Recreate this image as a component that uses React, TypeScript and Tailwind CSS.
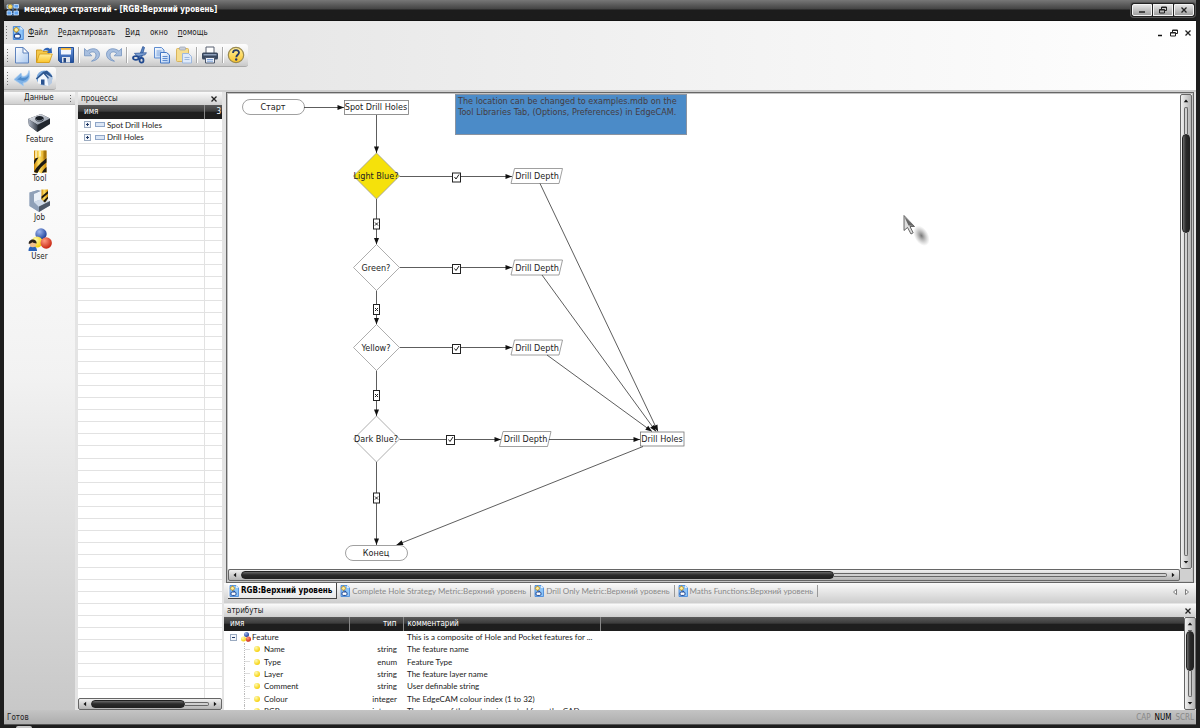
import type { ReactNode } from "react";

const noop = () => {};

/* ---------- icons ---------- */

function Defs() {
  return (
    <svg width="0" height="0" className="absolute" aria-hidden="true">
      <defs>
        <linearGradient id="page" x1="0" y1="0" x2="1" y2="1">
          <stop offset="0" stopColor="#ffffff" />
          <stop offset="1" stopColor="#a9c8f0" />
        </linearGradient>
        <linearGradient id="blue" x1="0" y1="0" x2="0" y2="1">
          <stop offset="0" stopColor="#6f9be0" />
          <stop offset="1" stopColor="#1f4d9c" />
        </linearGradient>
        <linearGradient id="gold" x1="0" y1="0" x2="0" y2="1">
          <stop offset="0" stopColor="#fff0a0" />
          <stop offset="1" stopColor="#fbc42a" />
        </linearGradient>
        <linearGradient id="steel" x1="0" y1="0" x2="1" y2="1">
          <stop offset="0" stopColor="#f4f6fa" />
          <stop offset="1" stopColor="#7d8797" />
        </linearGradient>
        <linearGradient id="steelDark" x1="0" y1="0" x2="1" y2="0">
          <stop offset="0" stopColor="#b4bccb" />
          <stop offset="1" stopColor="#3a414c" />
        </linearGradient>
        <linearGradient id="drill" x1="0" y1="0" x2="1" y2="0">
          <stop offset="0" stopColor="#c98200" />
          <stop offset=".4" stopColor="#ffe36b" />
          <stop offset="1" stopColor="#d18b00" />
        </linearGradient>
        <radialGradient id="ballBlue" cx=".35" cy=".3" r=".75">
          <stop offset="0" stopColor="#9fb8f0" />
          <stop offset="1" stopColor="#173a94" />
        </radialGradient>
        <radialGradient id="ballRed" cx=".35" cy=".3" r=".75">
          <stop offset="0" stopColor="#ff9a80" />
          <stop offset="1" stopColor="#c5200c" />
        </radialGradient>
        <radialGradient id="ballYellow" cx=".35" cy=".3" r=".75">
          <stop offset="0" stopColor="#fffbb0" />
          <stop offset="1" stopColor="#f5cd00" />
        </radialGradient>
        <radialGradient id="shadow">
          <stop offset="0" stopColor="#555" stopOpacity=".8" />
          <stop offset="1" stopColor="#888" stopOpacity="0" />
        </radialGradient>
      </defs>
    </svg>
  );
}

function Svg({ className, box = "0 0 18 18", children }: { className: string; box?: string; children: ReactNode }) {
  return (
    <svg viewBox={box} className={"shrink-0 " + className} aria-hidden="true">
      {children}
    </svg>
  );
}

const AppIcon = () => (
  <Svg className="size-3.5" box="0 0 14 14">
    <path d="M3 3.500h8v7H3zM7 1v12" fill="none" stroke="#4d8fe0" />
    <path d="M8 1.500h4.500v3.500H8zM1 8h4.500v4H1zM8 8h4.500v4H8z" fill="#5fa3f0" stroke="#cfe4fd" strokeWidth=".8" />
    <path d="M1 2h5v3.500H1z" fill="#5fa3f0" stroke="#cfe4fd" strokeWidth=".8" />
    <circle cx="4.200" cy="3.700" r="2.200" fill="#fbdc6a" stroke="#8a6a10" strokeWidth=".5" />
  </Svg>
);

const DocIcon = ({ className = "h-3 w-2.5" }: { className?: string }) => (
  <Svg className={className} box="0 0 10 12">
    <path d="M1 .5H7L9.500 3v8.500H1z" fill="#8cc4f8" stroke="#3f84d8" strokeWidth=".8" />
    <path d="M7 .5L9.500 3H7z" fill="#e3f0ff" />
    <path d="M3.500.6v5.400M.8 3.300h5.400" stroke="#c08a10" strokeWidth=".8" />
    <circle cx="3.500" cy="3.300" r="1.900" fill="#fff0a0" stroke="#c08a10" strokeWidth=".7" />
    <rect x="2" y="7" width="5" height="3.400" rx="1.200" fill="#fff" stroke="#1c4490" strokeWidth="1" />
    <path d="M3.500 6h2v1" stroke="#1c4490" fill="none" strokeWidth=".8" />
  </Svg>
);

const NewIcon = () => (
  <Svg className="size-[18px]">
    <path d="M2.500 1.500H10L15.500 7v10h-13z" fill="url(#page)" stroke="#5e83bd" />
    <path d="M10 1.500V7h5.500z" fill="#fff" stroke="#5e83bd" strokeLinejoin="round" />
  </Svg>
);
const OpenIcon = () => (
  <Svg className="size-[18px]">
    <path d="M1.500 16V4h5L8 5.500h6V16z" fill="#f3c84a" stroke="#c58a0a" strokeWidth=".8" />
    <path d="M1.500 16.500l3-8.500h12.800l-3 8.500z" fill="url(#gold)" stroke="#d69a12" strokeWidth=".8" />
    <path d="M8 5c1.500-3.500 5-4 7-2l1.500-1.500.5 5.500h-5l1.500-1.700C12 4 10 4 8 5z" fill="#2f64b5" />
  </Svg>
);
const SaveIcon = () => (
  <Svg className="size-[18px]">
    <path d="M1.500 1.500h15v15h-13l-2-2z" fill="url(#blue)" stroke="#244f94" />
    <path d="M4 2h10v6.500H4z" fill="#f2f7ff" />
    <path d="M4 2h10v1.800H4z" fill="#f3b53a" />
    <path d="M5 11h8v5.500H5z" fill="#dfe5ee" />
    <path d="M6.500 12h2.500v4.500H6.500z" fill="#26477f" />
  </Svg>
);
const UndoShape = () => (
  <path
    d="M1.500 2.500v7.300h7.300L6.400 7.200C9 5 12.800 5.600 13 9c.1 2.600-1.700 4.700-4.500 6.200 5-.6 8-3.300 8-7 0-5.500-7.500-7.500-12.500-3z"
    fill="#a8bfdf"
    stroke="#7393bf"
    strokeWidth=".8"
    strokeLinejoin="round"
  />
);
const UndoIcon = () => (
  <Svg className="size-[18px]">
    <UndoShape />
  </Svg>
);
const RedoIcon = () => (
  <Svg className="size-[18px]">
    <g transform="translate(18 0) scale(-1 1)">
      <UndoShape />
    </g>
  </Svg>
);
const CutIcon = () => (
  <Svg className="size-[18px]">
    <path d="M11.800 .5L13.500 1.500 10.500 12 8 11z" fill="#5c87c4" stroke="#20498f" strokeWidth=".7" />
    <path d="M4 5.500L15.500 9l-2 1.500L6 9.500z" fill="#7ea1d2" stroke="#20498f" strokeWidth=".6" transform="rotate(-20 9 8)" />
    <ellipse cx="4.800" cy="12" rx="2.800" ry="1.900" fill="none" stroke="#20498f" strokeWidth="1.800" />
    <ellipse cx="10.500" cy="14.300" rx="2" ry="2.400" fill="none" stroke="#20498f" strokeWidth="1.800" />
  </Svg>
);
const CopyIcon = () => (
  <Svg className="size-[18px]">
    <path d="M1.500 1.500h7L11 4v8H1.500z" fill="url(#page)" stroke="#5e8cd0" />
    <path d="M3.500 5h5M3.500 7h5M3.500 9h5" stroke="#7ea4dc" />
    <path d="M7.500 6.500h6L16.500 9v8h-9z" fill="url(#page)" stroke="#4377c4" />
    <path d="M9.500 10.500h5M9.500 12.500h5M9.500 14.500h5" stroke="#5e8cd0" />
  </Svg>
);
const PasteIcon = () => (
  <Svg className="size-[18px]">
    <rect x="1.500" y="2.500" width="12" height="13" rx="1" fill="#f5dd90" stroke="#d9b45c" />
    <rect x="4.500" y="1" width="6" height="3" rx="1" fill="#c9ced8" stroke="#9aa3b5" strokeWidth=".7" />
    <path d="M7.500 7.500h6l3 3V17h-9z" fill="#dfeafa" stroke="#9db8de" />
    <path d="M9.500 11.500h5M9.500 13.500h5" stroke="#9db8de" />
  </Svg>
);
const PrintIcon = () => (
  <Svg className="size-[18px]">
    <path d="M5 1h8v7H5z" fill="#fff" stroke="#596170" />
    <rect x="1" y="6.500" width="16" height="7" rx="1.500" fill="#39485f" />
    <path d="M2.500 8h13v1.500h-13z" fill="#8fa0ba" />
    <path d="M4.500 11.500h9V17h-9z" fill="#eef3fb" stroke="#4a566b" />
    <path d="M6 13.500h6M6 15.200h6" stroke="#5f8dd3" strokeWidth=".8" />
  </Svg>
);
const HelpIcon = () => (
  <Svg className="size-[18px]">
    <circle cx="9" cy="9" r="7.700" fill="url(#gold)" stroke="#9a8a50" strokeWidth="1.200" />
    <path d="M6 7c0-3.800 6-3.800 6-.4 0 2-2.700 2.300-2.700 4.600" fill="none" stroke="#2a3b66" strokeWidth="1.800" />
    <circle cx="9.200" cy="13.500" r="1.200" fill="#2a3b66" />
  </Svg>
);
const BackIcon = () => (
  <Svg className="size-[18px]">
    <path d="M1 10.500L8 4l1 3.300C13 8 15 5.500 16 1.500c2 7-.5 12-6 12.500l.5 3z" fill="#7fb2e6" stroke="#a9cdf0" strokeWidth=".8" />
    <path d="M4 10.500l4-3 .5 1.500c4 .3 6-1 7.500-3-1 4-3 5.500-6.500 5.800z" fill="#4f8ccc" />
  </Svg>
);
const HomeIcon = () => (
  <Svg className="size-[18px]">
    <ellipse cx="9.500" cy="9" rx="8" ry="7.500" fill="#7ba9dc" />
    <path d="M12 1.500l5.500 6-1 1-5-2.500-3.500-3z" fill="#2d568f" />
    <path d="M3 9l5.500-5 5 5.500v7.500L3 14.500z" fill="#f2f7fd" />
    <path d="M13.500 17l3.500-3V8.500L11 5z" fill="#b5c9e2" />
    <path d="M.8 9.500L8.500 2.500l5.500 6.500-1 .8L8.500 4.800 2 10.500z" fill="#2d568f" />
    <path d="M6 10.500h3.500v5.600L6 15.500z" fill="#2a5390" />
  </Svg>
);

const FeatureIcon = () => (
  <Svg className="size-6" box="0 0 24 24">
    <path d="M1 8L14 3l9 4.500v5.500L10.500 21 2 14.500z" fill="#22272e" />
    <path d="M1 8L14 3l9 4.500-12.500 6.300z" fill="url(#steel)" />
    <path d="M1 8l9.500 5.800V21L2 14.500z" fill="url(#steelDark)" />
    <ellipse cx="12.500" cy="7.800" rx="4.200" ry="2.800" fill="#1b2027" />
    <path d="M9 8.500c2 2.200 6 1.500 7-.5" stroke="#8b95a5" fill="none" />
  </Svg>
);
const ToolIcon = () => (
  <Svg className="size-6" box="0 0 24 24">
    <path d="M6 .5h12.500V23l-3-1.500-2 2-3-1.500-2 1.500L6 22z" fill="url(#drill)" />
    <path d="M6 22C8 17 14 12 18.500 8v4.500C14 16 11 19 9.500 23zM6 11C7.500 8 8 8 10.500 7.500L6 14.500zM14 23c.5-2.500 2.500-4.500 4.500-6V22z" fill="#1d1a12" />
    <path d="M8 .5v7.500M12 .5v6" stroke="#fff6c8" strokeWidth="1.500" />
    <path d="M15.500.5h3v7l-3 2z" fill="#7a5200" opacity=".5" />
  </Svg>
);
const JobIcon = () => (
  <Svg className="size-6" box="0 0 24 24">
    <path d="M1.500 3.500L10 1v9l5 3 7 1.500v2L11 23l-9.500-6z" fill="#aab9ce" />
    <path d="M1.500 3.500L10 1l3.500 1L6 5v8l5 3.500V23l-9.500-6z" fill="#8fa0b8" />
    <path d="M6 5l7.500-3v8l-7.500 3z" fill="#eaf0f8" />
    <path d="M6 13l7.500-3 8.500 2-11 6z" fill="#cfdae9" />
    <path d="M11 17.500L22 12v4.500L11 23z" fill="#4b5666" />
    <path d="M13.500 .5h6.500v9l-3 4-3.500-3z" fill="url(#drill)" />
    <path d="M13.500 7.500L20 2v2.500L13.500 10zM15 12l5-4.500v2L17 13.500z" fill="#1d1a12" />
  </Svg>
);
const UserIcon = () => (
  <Svg className="size-6" box="0 0 24 24">
    <circle cx="13" cy="6" r="5.700" fill="url(#ballBlue)" />
    <circle cx="9" cy="14" r="5.500" fill="url(#ballYellow)" />
    <circle cx="18.200" cy="15" r="5.700" fill="url(#ballRed)" />
    <path d="M.5 23c0-4 2-5 4-5s4.500 1 4.500 5z" fill="#2b62b8" />
    <circle cx="4.800" cy="16" r="3.200" fill="#f0c08c" />
    <path d="M.8 16c-.8-6 8.500-6 7.800-.4-2-.2-3.200-.8-4.200-1.300-.8.800-2 1.400-3.600 1.700z" fill="#2a2118" />
  </Svg>
);
const BallsIcon = () => (
  <Svg className="size-2.5" box="0 0 10 10">
    <circle cx="5.500" cy="2.500" r="2.500" fill="url(#ballBlue)" />
    <circle cx="2.500" cy="7" r="2.500" fill="url(#ballYellow)" />
    <circle cx="7.500" cy="7.200" r="2.600" fill="url(#ballRed)" />
  </Svg>
);

const WinMin = () => <Svg className="size-2" box="0 0 8 8"><path d="M1 6h6" stroke="#222" strokeWidth="1.500" /></Svg>;
const WinRestore = () => (
  <Svg className="size-2" box="0 0 8 8">
    <path d="M2.500 3V1h5v3.500H6M.5 3.500h5V7h-5z" fill="none" stroke="#222" />
    <path d="M.5 4h5M2.500 1.500h5" stroke="#222" />
  </Svg>
);
const WinClose = () => <Svg className="size-2" box="0 0 8 8"><path d="M1.500 1.500l5 5M6.500 1.500l-5 5" stroke="#222" strokeWidth="1.300" /></Svg>;

/* ---------- scroll bars ---------- */

const arrows = {
  left: "M5.500 1v6L2 4z",
  right: "M2.500 1v6L6 4z",
  up: "M1 5.500h6L4 2z",
  down: "M1 2.500h6L4 6z",
};

function ArrowButton({ dir }: { dir: keyof typeof arrows }) {
  return (
    <button type="button" aria-label={"Scroll " + dir} onClick={noop} className="flex size-3 shrink-0 items-center justify-center">
      <Svg className="size-1.5" box="0 0 8 8">
        <path d={arrows[dir]} fill="#111" />
      </Svg>
    </button>
  );
}

function HScroll({ size }: { size: number }) {
  return (
    <div className="flex h-3 w-full items-center rounded-[2px] border border-[#666] bg-linear-to-b from-[#f0f0f0] to-[#b4b4b4]">
      <ArrowButton dir="left" />
      <div className="flex min-w-0 flex-1 items-center">
        <div style={{ width: size + "%" }} className="h-2 rounded-full border border-[#222] bg-linear-to-b from-[#6a6a6a] via-[#2a2a2a] to-[#222]" />
        <div className="h-1 flex-1 rounded-r-full border border-l-0 border-[#666] bg-[#d0d0d0]" />
      </div>
      <ArrowButton dir="right" />
    </div>
  );
}

function VScroll({ before, size }: { before: number; size: number }) {
  return (
    <div className="flex h-full w-3 flex-col items-center rounded-[2px] border border-[#666] bg-linear-to-r from-[#f0f0f0] to-[#b4b4b4]">
      <ArrowButton dir="up" />
      <div className="flex min-h-0 flex-1 flex-col items-center">
        <div style={{ height: before + "%" }} className="w-1 rounded-t-full border border-b-0 border-[#666] bg-[#d0d0d0]" />
        <div style={{ height: size + "%" }} className="w-2 rounded-full border border-[#222] bg-linear-to-r from-[#6a6a6a] via-[#2a2a2a] to-[#222]" />
        <div className="w-1 flex-1 rounded-b-full border border-t-0 border-[#666] bg-[#d0d0d0]" />
      </div>
      <ArrowButton dir="down" />
    </div>
  );
}

/* ---------- window parts ---------- */

function Grip() {
  return (
    <span className="flex w-1 shrink-0 flex-col gap-0.5">
      {[0, 1, 2, 3, 4].map((i) => (
        <span key={i} className="size-px bg-[#777]" />
      ))}
    </span>
  );
}

function TitleBar() {
  const cls = "flex h-3 w-5 items-center justify-center border border-[#f4f4f4] bg-linear-to-b from-[#e4e4e4] to-[#a0a0a0]";
  return (
    <header className="flex h-[21px] shrink-0 items-center border-b border-[#111] bg-linear-to-b from-[#777] via-[#444] via-45% to-[#1c1c1c] to-50% pr-px">
      <div className="flex flex-1 items-center gap-1 pl-0.5">
        <AppIcon />
        <h1 className="text-[8px] font-bold text-white">менеджер стратегий - [RGB:Верхний уровень]</h1>
      </div>
      <div className="flex gap-px rounded-[3px] bg-[#222] p-px shadow-[0_0_0_1px_#555]">
        <button type="button" aria-label="Свернуть" className={cls + " rounded-l-[2px]"}><WinMin /></button>
        <button type="button" aria-label="Восстановить" className={cls}><WinRestore /></button>
        <button type="button" aria-label="Закрыть" className={cls + " rounded-r-[2px]"}><WinClose /></button>
      </div>
    </header>
  );
}

const menus = [
  ["Ф", "айл"],
  ["Р", "едактировать"],
  ["В", "ид"],
  ["", "окно"],
  ["п", "омощь"],
];

function MenuBar() {
  return (
    <nav className="flex h-[23px] items-center pr-1 pl-0.5">
      <Grip />
      <span className="ml-0.5">
        <DocIcon className="h-3.5 w-3" />
      </span>
      <ul className="flex flex-1 gap-2.5 pl-1 text-[8px]">
        {menus.map(([key, rest]) => (
          <li key={rest}>
            <button type="button">
              <u className="underline-offset-1">{key}</u>
              {rest}
            </button>
          </li>
        ))}
      </ul>
      <div className="flex items-center gap-1.5">
        <button type="button" aria-label="Свернуть документ"><Svg className="size-2" box="0 0 8 8"><path d="M2 6.500h4" stroke="#111" strokeWidth="1.500" /></Svg></button>
        <button type="button" aria-label="Восстановить документ"><WinRestore /></button>
        <button type="button" aria-label="Закрыть документ"><WinClose /></button>
      </div>
    </nav>
  );
}

const tools: ([string, () => ReactNode] | null)[] = [
  ["Создать", NewIcon],
  ["Открыть", OpenIcon],
  ["Сохранить", SaveIcon],
  null,
  ["Отменить", UndoIcon],
  ["Вернуть", RedoIcon],
  null,
  ["Вырезать", CutIcon],
  ["Копировать", CopyIcon],
  ["Вставить", PasteIcon],
  null,
  ["Печать", PrintIcon],
  null,
  ["Справка", HelpIcon],
];
const navTools: typeof tools = [
  ["Назад", BackIcon],
  ["Домой", HomeIcon],
];

function Toolbar({ items }: { items: typeof tools }) {
  return (
    <div className="flex h-[23px] items-center self-start rounded-r-[3px] border-b border-[#aaa] bg-linear-to-b from-[#fdfdfd] via-[#ededed] to-[#c9c9c9] pr-px pl-[3px]">
      <Grip />
      {items.map((t, i) => {
        if (!t) return <span key={i} className="mx-px h-4 w-0.5 border-r border-l border-r-white border-l-[#aaa]" />;
        const Icon = t[1];
        return (
          <button key={i} type="button" aria-label={t[0]} className="flex w-[22px] justify-center">
            <Icon />
          </button>
        );
      })}
    </div>
  );
}

const paneHead = "flex h-[13px] shrink-0 items-center bg-linear-to-b from-[#fafafa] to-[#cfcfcf] text-[8px]";
const darkHead = "bg-linear-to-b from-[#5a5a5a] via-[#3c3c3c] via-45% to-[#1e1e1e] to-50%";

const dataItems: [string, () => ReactNode][] = [
  ["Feature", FeatureIcon],
  ["Tool", ToolIcon],
  ["Job", JobIcon],
  ["User", UserIcon],
];

function Sidebar() {
  return (
    <aside className="flex w-[71px] shrink-0 flex-col">
      <div className={paneHead + " border-b border-[#bbb] pr-1 pl-5"}>
        <h2 className="flex-1">Данные</h2>
        <span className="flex flex-col gap-0.5">
          <i className="size-px bg-[#666]" />
          <i className="size-px bg-[#666]" />
          <i className="size-px bg-[#666]" />
        </span>
      </div>
      <ul className="flex flex-1 flex-col items-center gap-1 bg-linear-to-b from-white via-[#f2f2f2] via-45% to-[#c8c8c8] pt-1.5 text-[8px]">
        {dataItems.map(([label, Icon]) => (
          <li key={label}>
            <button type="button" className="flex h-[35px] flex-col items-center leading-[10px]">
              <Icon />
              {label}
            </button>
          </li>
        ))}
      </ul>
    </aside>
  );
}

function Expander({ open }: { open?: boolean }) {
  return (
    <button type="button" aria-label={open ? "Свернуть" : "Развернуть"} className="flex size-[7px] shrink-0 items-center justify-center border border-[#9aaac0] bg-[#f2f5fa]">
      <Svg className="size-[5px]" box="0 0 5 5">
        <path d={open ? "M1 2.500h3" : "M1 2.500h3M2.500 1v3"} stroke="#223a66" />
      </Svg>
    </button>
  );
}

const processes = ["Spot Drill Holes", "Drill Holes"];

function Processes() {
  return (
    <section className="flex w-[144px] shrink-0 flex-col bg-white">
      <div className={paneHead + " pr-1 pl-[3px]"}>
        <h2 className="flex-1">процессы</h2>
        <button type="button" aria-label="Закрыть"><WinClose /></button>
      </div>
      <div className="h-0 flex-1 overflow-hidden">
        <table className="h-[calc(100%+3px)] w-full table-fixed border-collapse text-[8px] leading-[10px]">
          <thead>
            <tr className={"h-[14px] text-white " + darkHead}>
              <th className="border-r border-[#888] p-0 pl-1.5 text-left font-normal">имя</th>
              <th className="w-[18px] p-0 pr-px text-right font-normal">3</th>
            </tr>
          </thead>
          <tbody>
            {Array.from({ length: 48 }, (_, i) => (
              <tr key={i} className="h-3 border-b border-[#e2e2e2]">
                <td className="border-r border-[#e2e2e2] p-0">
                  {processes[i] && (
                    <div className="flex h-2.5 items-center pl-1.5 font-[Lato,sans-serif]">
                      <Expander />
                      <span className="mr-0.5 ml-1 h-[5px] w-[10px] border border-[#8fa6c8] bg-[#dbe6f5]" />
                      {processes[i]}
                    </div>
                  )}
                </td>
                <td className="p-0" />
              </tr>
            ))}
          </tbody>
        </table>
      </div>
      <HScroll size={80} />
    </section>
  );
}

/* ---------- strategy diagram ---------- */

function Arrow({ x1, y1, x2, y2 }: { x1: number; y1: number; x2: number; y2: number }) {
  const a = (Math.atan2(y2 - y1, x2 - x1) * 180) / Math.PI;
  return (
    <g>
      <path d={`M${x1} ${y1}L${x2} ${y2}`} stroke="#333" strokeWidth=".8" />
      <path d="M0 0l-6.500-2.500v5z" fill="#111" transform={`translate(${x2} ${y2}) rotate(${a})`} />
    </g>
  );
}
function Label({ x, y, children }: { x: number; y: number; children: string }) {
  return (
    <text x={x} y={y + 3} textAnchor="middle" fill="#222" className="text-[9px]">
      {children}
    </text>
  );
}
function Decision({ y, label, fill = "#fff" }: { y: number; label: string; fill?: string }) {
  return (
    <g>
      <path d={`M376.500 ${y - 23}l23 23-23 23-23-23z`} fill={fill} stroke="#999" strokeWidth=".8" />
      <Label x={376} y={y}>{label}</Label>
    </g>
  );
}
function Depth({ x, y }: { x: number; y: number }) {
  return (
    <g>
      <path d={`M${x - 22.5} ${y - 7.5}h48l-3.500 15h-48z`} fill="#fff" stroke="#888" strokeWidth=".8" />
      <Label x={x} y={y}>Drill Depth</Label>
    </g>
  );
}
const Yes = ({ x, y }: { x: number; y: number }) => (
  <g>
    <rect x={x - 4} y={y - 4} width="8" height="9" fill="#fff" stroke="#222" />
    <path d={`M${x - 2} ${y}l1.500 2 3-4.500`} fill="none" stroke="#222" />
  </g>
);
const No = ({ y }: { y: number }) => (
  <g>
    <rect x="373.500" y={y - 5} width="6" height="10" fill="#fff" stroke="#222" />
    <path d={`M375 ${y - 1.5}l3 3M378 ${y - 1.5}l-3 3`} stroke="#222" />
  </g>
);

function Diagram() {
  return (
    <svg width="952" height="475" viewBox="228 94 952 475" className="block max-w-none" role="img" aria-label="RGB:Верхний уровень">
      <rect x="455.500" y="94.500" width="231" height="40" fill="#4b8bc8" stroke="#8a93a0" />
      <text fill="#453c42" className="text-[9px]">
        <tspan x="458" y="104">The location can be changed to examples.mdb on the</tspan>
        <tspan x="458" y="115">Tool Libraries Tab, (Options, Preferences) in EdgeCAM.</tspan>
      </text>

      <rect x="242.500" y="99.500" width="62" height="15" rx="7.500" fill="#fff" stroke="#888" strokeWidth=".8" />
      <Label x={273} y={107}>Старт</Label>
      <rect x="344.500" y="100.500" width="64" height="14" fill="#fff" stroke="#777" strokeWidth=".8" />
      <Label x={376} y={107}>Spot Drill Holes</Label>
      <Arrow x1={304} y1={107.5} x2={344} y2={107.5} />

      <Arrow x1={376.5} y1={115} x2={376.5} y2={153} />
      <Arrow x1={376.5} y1={199} x2={376.5} y2={244.5} />
      <Arrow x1={376.5} y1={290.5} x2={376.5} y2={324.5} />
      <Arrow x1={376.5} y1={370.5} x2={376.5} y2={416} />
      <Arrow x1={376.5} y1={462} x2={376.5} y2={545} />
      <No y={224} />
      <No y={309.5} />
      <No y={395.5} />
      <No y={498} />

      <Arrow x1={399.5} y1={176.5} x2={512} y2={176.5} />
      <Arrow x1={399.5} y1={267.5} x2={512} y2={267.5} />
      <Arrow x1={399.5} y1={347.5} x2={512} y2={347.5} />
      <Arrow x1={399.5} y1={439.5} x2={501} y2={439.5} />
      <Yes x={456.5} y={177} />
      <Yes x={456.5} y={268.5} />
      <Yes x={456.5} y={348.5} />
      <Yes x={450.5} y={439.5} />

      <Decision y={176} label="Light Blue?" fill="#f5e10b" />
      <Decision y={267.5} label="Green?" />
      <Decision y={347.5} label="Yellow?" />
      <Decision y={439} label="Dark Blue?" />

      <Depth x={537} y={176} />
      <Depth x={537} y={267.5} />
      <Depth x={537} y={347.5} />
      <Depth x={525.5} y={439} />

      <Arrow x1={540} y1={183.5} x2={658} y2={431.5} />
      <Arrow x1={542} y1={275} x2={656} y2={431.5} />
      <Arrow x1={547} y1={355} x2={652} y2={431.5} />
      <Arrow x1={549} y1={439.5} x2={640} y2={439.5} />
      <rect x="640.500" y="432" width="43.500" height="14" fill="#fff" stroke="#777" strokeWidth=".8" />
      <Label x={662} y={439}>Drill Holes</Label>
      <Arrow x1={643} y1={446.5} x2={396.5} y2={545} />

      <rect x="345.500" y="545.500" width="62" height="15" rx="7.500" fill="#fff" stroke="#888" strokeWidth=".8" />
      <Label x={376} y={553}>Конец</Label>

      <ellipse cx="921.500" cy="236" rx="7" ry="11" fill="url(#shadow)" transform="rotate(-30 921 236)" />
      <path d="M904 215.500v15l3.500-3 3.500 6.500 2.200-1.200-3.200-6.300h4.500z" fill="#ddd" stroke="#444" strokeWidth=".8" strokeLinejoin="round" />
      <path d="M904.500 217l9.500 9-5.500-.5z" fill="#666" />
    </svg>
  );
}

const tabs = ["RGB:Верхний уровень", "Complete Hole Strategy Metric:Верхний уровень", "Drill Only Metric:Верхний уровень", "Maths Functions:Верхний уровень"];

function Tabs() {
  return (
    <div className="flex h-5 shrink-0 items-start bg-linear-to-b from-[#fafafa] to-[#cdcdcd] pr-1.5 pl-1">
      <div role="tablist" className="flex flex-1 items-center text-[8px] leading-4">
        {tabs.map((t, i) => (
          <button
            key={t}
            type="button"
            role="tab"
            aria-selected={i === 0}
            className={
              i === 0
                ? "flex h-4 items-center gap-0.5 border-r border-b border-[#444] bg-linear-to-b from-white to-[#e8e8e8] pr-1 pl-px font-bold text-black"
                : "flex h-3 items-center gap-0.5 border-r border-[#999] pr-1 pl-[3px] font-[Lato,sans-serif] text-[#888]"
            }
          >
            <DocIcon />
            {t}
          </button>
        ))}
      </div>
      <div className="flex gap-1.5 pt-1.5">
        <button type="button" aria-label="Предыдущая вкладка"><Svg className="size-1.5" box="0 0 8 8"><path d="M6 .5v7L2 4z" fill="#fff" stroke="#555" /></Svg></button>
        <button type="button" aria-label="Следующая вкладка"><Svg className="size-1.5" box="0 0 8 8"><path d="M2 .5v7L6 4z" fill="#fff" stroke="#555" /></Svg></button>
      </div>
    </div>
  );
}

const attributes = [
  ["Feature", "", "This is a composite of Hole and Pocket features for ..."],
  ["Name", "string", "The feature name"],
  ["Type", "enum", "Feature Type"],
  ["Layer", "string", "The feature layer name"],
  ["Comment", "string", "User definable string"],
  ["Colour", "integer", "The EdgeCAM colour index (1 to 32)"],
  ["RGB", "integer", "The colour of the feature imported from the CAD mo..."],
];

function Attributes() {
  return (
    <section className="flex h-[107px] shrink-0 flex-col pt-px">
      <div className={paneHead + " pr-1 pl-[3px]"}>
        <h2 className="flex-1">атрибуты</h2>
        <button type="button" aria-label="Закрыть"><WinClose /></button>
      </div>
      <div className="flex min-h-0 flex-1 bg-white">
        <div className="min-w-0 flex-1 overflow-hidden">
          <table className="h-[100px] w-full table-fixed border-collapse text-[8px] leading-3">
            <thead>
              <tr className={"h-3.5 text-left text-white " + darkHead}>
                <th className="w-[125px] border-r border-[#888] p-0 pl-1.5 font-normal">имя</th>
                <th className="w-[54px] border-r border-[#888] p-0 pr-1.5 text-right font-normal">тип</th>
                <th className="w-[197px] border-r border-[#888] p-0 pl-1 font-normal">комментарий</th>
                <th className="p-0" />
              </tr>
            </thead>
            <tbody className="font-[Lato,sans-serif]">
              {attributes.map(([name, type, comment], i) => (
                <tr key={name}>
                  <td className="p-0">
                    {i === 0 ? (
                      <div className="flex items-center gap-1 pl-1.5">
                        <Expander open />
                        <span className="flex items-center gap-px">
                          <BallsIcon />
                          {name}
                        </span>
                      </div>
                    ) : (
                      <div className="flex items-center pl-5">
                        <span className="mr-1 flex h-3 w-1.5 items-center border-l border-dotted border-[#bbb]">
                          <i className="h-px w-full bg-[#ddd]" />
                        </span>
                        <Svg className="mr-1 size-1.5" box="0 0 6 6"><circle cx="3" cy="3" r="3" fill="url(#ballYellow)" /></Svg>
                        {name}
                      </div>
                    )}
                  </td>
                  <td className="p-0 pr-1.5 text-right">{type}</td>
                  <td className="p-0 pl-1 whitespace-nowrap">{comment}</td>
                  <td className="p-0" />
                </tr>
              ))}
            </tbody>
          </table>
        </div>
        <VScroll before={0} size={60} />
      </div>
    </section>
  );
}

export default function App() {
  return (
    <div className="flex h-screen flex-col bg-[#1e1e1e] px-1 font-['DejaVu_Sans_Condensed','DejaVu_Sans',sans-serif] text-[#222]">
      <Defs />
      <TitleBar />
      <div className="flex shrink-0 flex-col border-b-2 border-[#cfcfcf] bg-linear-to-r from-[#e0e0e0] via-[#f0f0f0] via-50% to-white">
        <MenuBar />
        <Toolbar items={tools} />
        <Toolbar items={navTools} />
      </div>
      <main className="flex min-h-0 flex-1 bg-[#e4e4e4]">
        <Sidebar />
        <div className="w-[3px] shrink-0" />
        <Processes />
        <div className="w-0.5 shrink-0" />
        <div className="flex min-w-0 flex-1 flex-col">
          <div className="mx-0.5 flex min-h-0 flex-1 flex-col border border-[#666] bg-[#c4c4c4] p-px">
            <div className="flex min-h-0 flex-1 bg-white">
              <div className="min-w-0 flex-1 overflow-hidden">
                <Diagram />
              </div>
              <VScroll before={6} size={22} />
            </div>
            <div className="flex bg-[#d0d0d0] pr-3">
              <HScroll size={64} />
            </div>
          </div>
          <Tabs />
          <Attributes />
        </div>
      </main>
      <footer className="flex h-3.5 shrink-0 items-center bg-linear-to-b from-[#c4c4c4] to-[#adadad] pt-0.5 pr-0.5 pl-[3px] text-[8px]">
        <span className="flex-1">Готов</span>
        <div className="flex gap-1 text-[#888]">
          <span>CAP</span>
          <span className="text-black">NUM</span>
          <span>SCRL</span>
        </div>
      </footer>
      <div className="flex h-1 shrink-0 items-end border-t border-[#555] pl-3">
        <span className="h-0.5 w-4 rounded-t-full bg-[#c8c8c8]" />
      </div>
    </div>
  );
}
